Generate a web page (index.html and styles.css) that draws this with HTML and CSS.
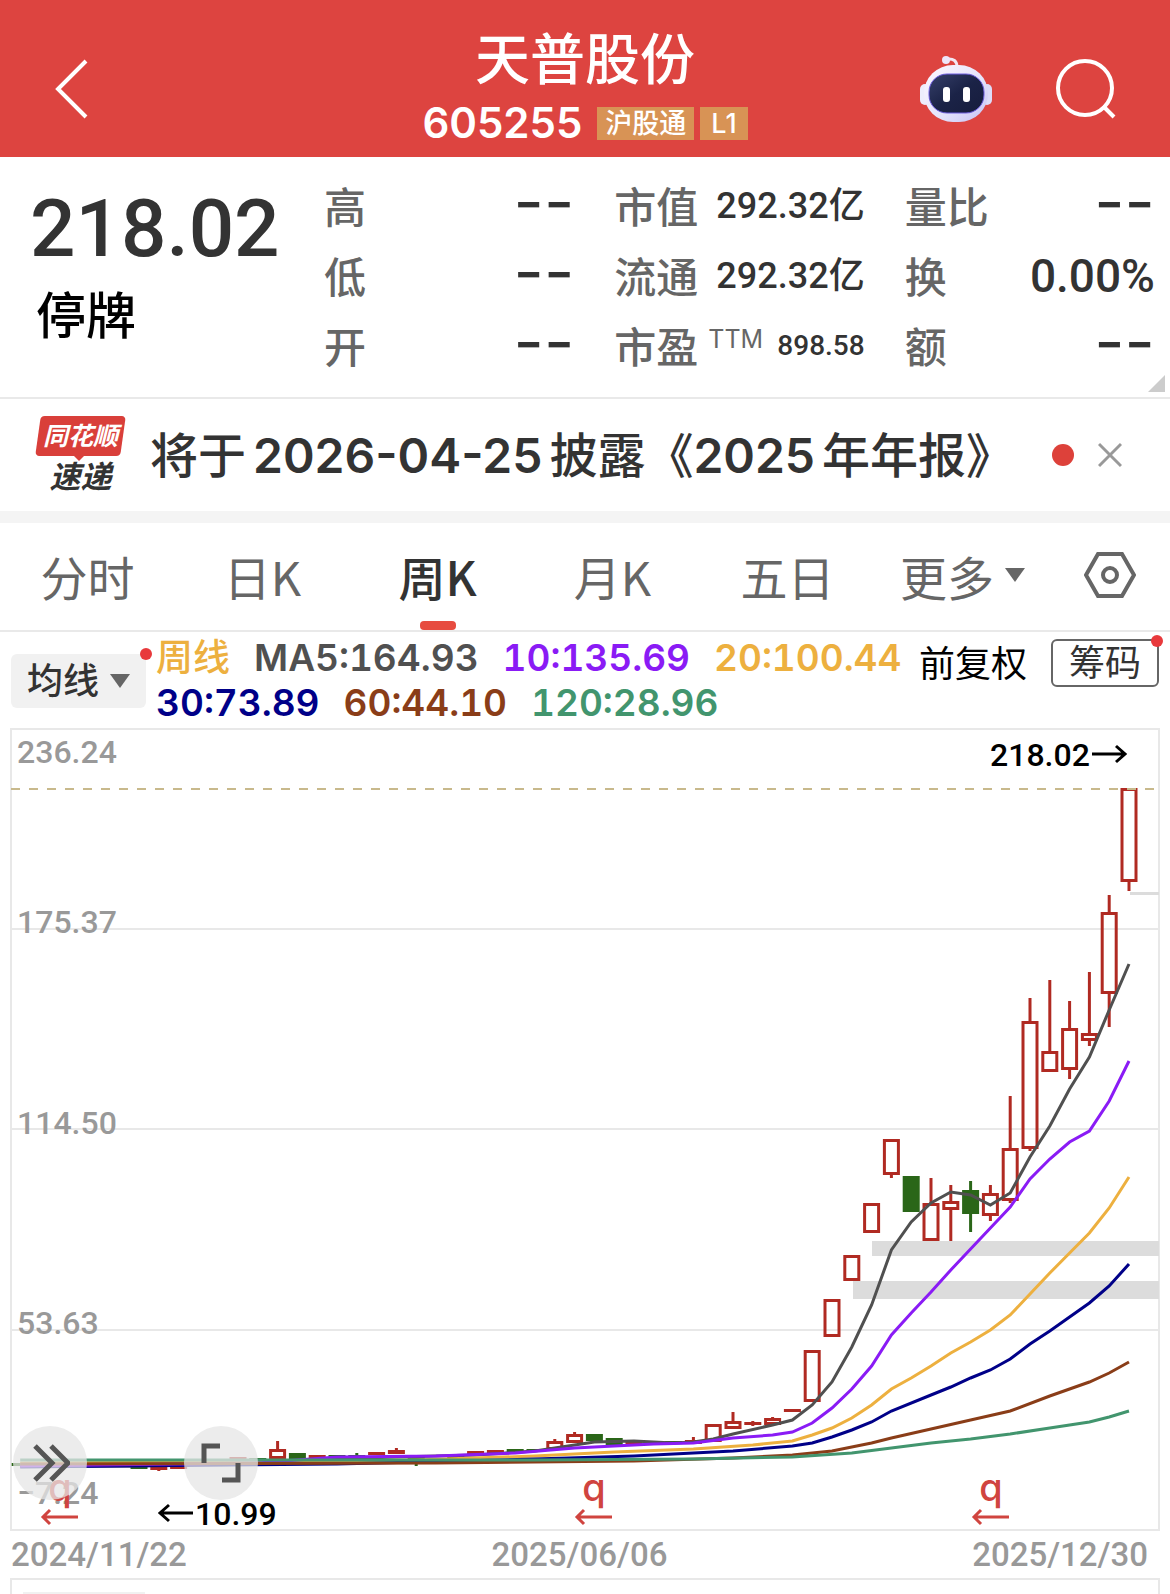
FILE: index.html
```html
<!DOCTYPE html>
<html lang="zh-CN">
<head>
    <meta charset="UTF-8">
    <meta name="viewport" content="width=device-width, initial-scale=1">
    <title>天普股份 605255</title>
    <link rel="stylesheet" href="styles.css">
</head>
<body>
    <header class="header">
        <button class="icon-btn back" aria-label="返回">
            <svg width="36" height="62" viewBox="0 0 36 62"><path d="M32 3 L4 31 L32 59" fill="none" stroke="#fff" stroke-width="4"/></svg>
        </button>
        <div class="title">
            <h1>天普股份</h1>
            <div class="code-line">
                <span class="code">605255</span>
                <span class="tag">沪股通</span>
                <span class="tag tag-level">L1</span>
            </div>
        </div>
        <div class="header-actions">
            <button class="icon-btn" aria-label="智能助手">
                <svg width="72" height="68" viewBox="0 0 72 68">
                    <defs>
                        <linearGradient id="shell" x1="0" y1="0" x2="1" y2="1">
                            <stop offset="0" stop-color="#fdf9ff"/>
                            <stop offset="0.6" stop-color="#e3e2fb"/>
                            <stop offset="1" stop-color="#c4c0f3"/>
                        </linearGradient>
                        <linearGradient id="face" x1="0" y1="0" x2="1" y2="1">
                            <stop offset="0" stop-color="#36406a"/>
                            <stop offset="0.5" stop-color="#1b2347"/>
                            <stop offset="1" stop-color="#161c3c"/>
                        </linearGradient>
                    </defs>
                    <path d="M27 4 Q37 3 37 12" fill="none" stroke="#f3e6f2" stroke-width="3"/>
                    <circle cx="26" cy="5" r="4" fill="#eee6fa"/>
                    <rect x="0" y="29" width="10" height="21" rx="5" fill="#ededfc"/>
                    <rect x="62" y="29" width="10" height="21" rx="5" fill="#dddcf8"/>
                    <rect x="4" y="10" width="64" height="57" rx="29" fill="url(#shell)"/>
                    <rect x="9" y="19" width="55" height="39" rx="18" fill="url(#face)" stroke="#6f5fe0" stroke-width="1"/>
                    <rect x="23" y="32" width="7" height="15" rx="3" fill="#fff"/>
                    <rect x="43" y="32" width="7" height="15" rx="3" fill="#fff"/>
                </svg>
            </button>
            <button class="icon-btn" aria-label="搜索">
                <svg width="60" height="60" viewBox="0 0 60 60" fill="none" stroke="#fff" stroke-width="4"><circle cx="29" cy="29" r="27"/><path d="M47 47 L58 58"/></svg>
            </button>
        </div>
    </header>

    <section class="quote">
        <div class="price-box">
            <div class="price">218.02</div>
            <div class="status">停牌</div>
        </div>
        <dl class="stats">
            <div class="stat"><dt>高</dt><dd class="empty">--</dd></div>
            <div class="stat"><dt>低</dt><dd class="empty">--</dd></div>
            <div class="stat"><dt>开</dt><dd class="empty">--</dd></div>
        </dl>
        <dl class="stats">
            <div class="stat"><dt>市值</dt><dd>292.32亿</dd></div>
            <div class="stat"><dt>流通</dt><dd>292.32亿</dd></div>
            <div class="stat"><dt>市盈<sup>TTM</sup></dt><dd class="small">898.58</dd></div>
        </dl>
        <dl class="stats">
            <div class="stat"><dt>量比</dt><dd class="empty">--</dd></div>
            <div class="stat"><dt>换</dt><dd class="large">0.00%</dd></div>
            <div class="stat"><dt>额</dt><dd class="empty">--</dd></div>
        </dl>
        <span class="corner"></span>
    </section>

    <section class="notice">
        <div class="notice-logo">
            <span class="logo-top">同花顺</span>
            <span class="logo-bottom">速递</span>
        </div>
        <a href="#" class="notice-text">将于<span class="num date">2026-04-25</span>披露《<span class="num year">2025</span>年年报》</a>
        <span class="dot"></span>
        <button class="icon-btn" aria-label="关闭">
            <svg width="24" height="26" viewBox="0 0 24 26"><path d="M1 2 L23 24 M23 2 L1 24" stroke="#999" stroke-width="3"/></svg>
        </button>
    </section>

    <nav class="tabs">
        <button class="tab">分时</button>
        <button class="tab">日K</button>
        <button class="tab active">周K</button>
        <button class="tab">月K</button>
        <button class="tab">五日</button>
        <button class="tab">更多<span class="caret"></span></button>
        <button class="tab" aria-label="设置">
            <svg width="52" height="48" viewBox="0 0 52 48" fill="none" stroke="#666" stroke-width="4"><path d="M14 3 H38 L50 24 L38 45 H14 L2 24 Z"/><circle cx="26" cy="24" r="7"/></svg>
        </button>
    </nav>

    <section class="ma-bar">
        <button class="ma-select">均线<span class="caret"></span><span class="badge"></span></button>
        <div class="ma-values">
            <div class="ma-row">
                <span class="week">周线</span>
                <span class="ma5">MA5:164.93</span>
                <span class="ma10">10:135.69</span>
                <span class="ma20">20:100.44</span>
            </div>
            <div class="ma-row">
                <span class="ma30">30:73.89</span>
                <span class="ma60">60:44.10</span>
                <span class="ma120">120:28.96</span>
            </div>
        </div>
        <button class="adjust">前复权</button>
        <button class="chips">筹码<span class="badge"></span></button>
    </section>

    <section class="chart">
        <svg id="kline" viewBox="0 728 1170 804" role="img" aria-label="周K线图"></svg>
        <button class="round-btn scroll-btn" aria-label="快进">
            <svg width="40" height="40" viewBox="0 0 40 40"><path d="M5 3 L22 20 L5 37 M21 3 L38 20 L21 37"/></svg>
        </button>
        <button class="round-btn full-btn" aria-label="全屏">
            <svg width="40" height="40" viewBox="0 0 40 40"><path d="M3 20 V3 H19 M37 20 V37 H21"/></svg>
        </button>
    </section>
    <div class="dates">
        <span>2024/11/22</span>
        <span>2025/06/06</span>
        <span>2025/12/30</span>
    </div>
    <div class="sub-chart"><span class="sub-select"></span></div>

    <script src="script.js"></script>
</body>
</html>
```
FILE: styles.css
```css
* {
    box-sizing: border-box;
}

body {
    margin: 0;
    background-color: #fff;
    color: #333;
    font-family: Inter, "Noto Sans CJK SC", sans-serif;
}

button {
    padding: 0;
    border: none;
    background: none;
    color: inherit;
    font: inherit;
    white-space: nowrap;
    cursor: pointer;
}

h1,
dl,
dd {
    margin: 0;
}

svg {
    display: block;
}

.header {
    display: grid;
    grid-template-columns: 1fr auto 1fr;
    align-items: center;
    padding: 25px 54px 4px;
    background-color: #dd4440;
    color: #fff;
}

.back {
    justify-self: start;
}

.title {
    text-align: center;
}

.title h1 {
    font-size: 55px;
    font-weight: 500;
    line-height: 68px;
}

.code-line {
    display: flex;
    align-items: center;
    justify-content: center;
    gap: 6px;
    line-height: 60px;
}

.code {
    margin-right: 9px;
    font-size: 42px;
    font-weight: 600;
}

.tag {
    padding: 0 8px;
    background-color: #d89355;
    font-size: 27px;
    font-weight: 500;
    line-height: 33px;
}

.tag-level {
    padding: 0 11px;
}

.header-actions {
    display: flex;
    align-items: center;
    justify-content: flex-end;
    gap: 64px;
}

.quote {
    position: relative;
    display: grid;
    grid-template-columns: 254px repeat(3, 1fr);
    gap: 40px;
    padding: 14px 15px 16px 30px;
    border-bottom: 2px solid #e9e9e9;
}

.price {
    font-family: Roboto, sans-serif;
    font-size: 80px;
    font-weight: 500;
    line-height: 116px;
}

.status {
    padding-left: 6px;
    color: #000;
    font-size: 50px;
    font-weight: 500;
    line-height: 58px;
}

.stat {
    display: flex;
    align-items: center;
    justify-content: space-between;
    height: 70px;
    white-space: nowrap;
}

.stat dt {
    padding-bottom: 4px;
    color: #666;
    font-size: 42px;
    font-weight: 500;
}

.stat sup {
    margin-left: 10px;
    font-size: 25px;
    font-weight: 400;
    line-height: 25px;
}

.stat dd {
    font-family: Roboto, "Noto Sans CJK SC", sans-serif;
    font-size: 36px;
    font-weight: 500;
    line-height: 60px;
}

.stat .empty {
    padding-bottom: 10px;
    font-family: Inter, sans-serif;
    font-size: 66px;
    font-weight: 400;
}

.stat .large {
    font-size: 46px;
}

.stat .small {
    font-size: 28px;
}

.corner {
    position: absolute;
    right: 5px;
    bottom: 5px;
    width: 17px;
    height: 17px;
    background-color: #ccc;
    clip-path: polygon(100% 0, 100% 100%, 0 100%);
}

.notice {
    display: flex;
    align-items: center;
    gap: 24px;
    height: 124px;
    padding: 0 48px 0 35px;
    border-bottom: 12px solid #f4f4f4;
}

.notice-logo {
    position: relative;
    flex-shrink: 0;
    width: 91px;
    font-style: italic;
    font-weight: 700;
    text-align: center;
}

.logo-top,
.logo-bottom {
    display: block;
}

.logo-top {
    position: relative;
    color: #fff;
    font-size: 25px;
    line-height: 40px;
}

.logo-top::before {
    content: "";
    position: absolute;
    inset: 0 3px;
    z-index: -1;
    border-radius: 4px;
    background-color: #d93f3a;
    transform: skewX(-8deg);
}

.logo-top::after {
    content: "";
    position: absolute;
    left: 38px;
    top: 39px;
    border: 6px solid transparent;
    border-top-color: #d93f3a;
}

.logo-bottom {
    padding-top: 4px;
    font-size: 31px;
    line-height: 34px;
}

.notice-text {
    flex: 1;
    padding-bottom: 7px;
    color: #333;
    font-size: 48px;
    font-weight: 500;
    text-decoration: none;
    white-space: nowrap;
}

.num {
    margin-right: 7px;
    font-weight: 600;
}

.date {
    margin-left: 7px;
}

.dot {
    width: 22px;
    height: 22px;
    border-radius: 50%;
    background-color: #dd413a;
}

.tabs {
    display: grid;
    grid-template-columns: repeat(6, 175fr) 120fr;
    height: 109px;
    border-bottom: 2px solid #e9e9e9;
}

.tab {
    position: relative;
    display: flex;
    align-items: center;
    justify-content: center;
    padding-bottom: 3px;
    color: #666;
    font-family: "Noto Sans CJK SC", sans-serif;
    font-size: 47px;
    font-weight: 400;
}

.tab.active {
    color: #333;
    font-weight: 500;
}

.tab.active::after {
    content: "";
    position: absolute;
    bottom: 0;
    width: 36px;
    height: 9px;
    border-radius: 4px;
    background-color: #e74c40;
}

.caret {
    margin-left: 11px;
    border: 10px solid transparent;
    border-top: 14px solid #666;
    border-bottom: none;
}

.ma-bar {
    display: flex;
    align-items: flex-start;
    height: 96px;
    padding: 0 11px;
}

.ma-select {
    position: relative;
    display: flex;
    align-items: center;
    margin-top: 22px;
    padding: 0 16px;
    border-radius: 6px;
    background-color: #f1f1f1;
    font-size: 36px;
    font-weight: 500;
    line-height: 54px;
}

.badge {
    position: absolute;
    top: -6px;
    right: -6px;
    width: 12px;
    height: 12px;
    border-radius: 50%;
    background-color: #e8393c;
}

.ma-values {
    flex: 1;
    padding-top: 3px;
    padding-left: 10px;
    font-size: 37px;
    font-weight: 600;
    font-variant-numeric: tabular-nums;
    line-height: 45px;
    white-space: nowrap;
}

.ma-row {
    display: flex;
    gap: 24px;
}

.week,
.ma20 {
    color: #edb03f;
}

.week {
    font-weight: 500;
}

.ma5 {
    color: #505050;
}

.ma10 {
    color: #8a1bf5;
}

.ma30 {
    color: #000088;
}

.ma60 {
    color: #8a3d18;
}

.ma120 {
    color: #42956e;
}

.adjust {
    margin: 7px 24px 0 0;
    color: #000;
    font-size: 36px;
    line-height: 50px;
}

.chips {
    position: relative;
    margin-top: 7px;
    padding: 0 16px;
    border: 2px solid #666;
    border-radius: 6px;
    font-size: 36px;
    line-height: 44px;
}

.chart {
    position: relative;
}

.chart > svg {
    width: 100%;
    height: auto;
    font-family: Roboto, sans-serif;
    font-size: 32px;
    font-weight: 500;
}

.axis-label {
    fill: #999;
}

.price-label {
    fill: #000;
}

.mark {
    fill: #d0443f;
    font-family: Inter, sans-serif;
    font-size: 38px;
    text-anchor: middle;
}

.round-btn {
    position: absolute;
    bottom: 4%;
    width: 74px;
    height: 74px;
    border-radius: 50%;
    background-color: rgba(230, 230, 230, 0.75);
}

.round-btn svg {
    margin: auto;
    fill: none;
    stroke: #555;
    stroke-width: 5;
}

.scroll-btn {
    left: 13px;
}

.full-btn {
    left: 184px;
}

.dates {
    display: flex;
    justify-content: space-between;
    padding: 0 22px 0 11px;
    color: #999;
    font-family: Roboto, sans-serif;
    font-size: 33px;
    font-weight: 500;
    line-height: 46px;
}

.sub-chart {
    height: 16px;
    margin: 0 10px;
    padding: 12px 11px 0;
    border: 2px solid #e8e8e8;
    border-bottom: none;
}

.sub-select {
    display: block;
    width: 122px;
    height: 2px;
    background-color: #f1f1f1;
}
```
FILE: script.js
```javascript
var svg = document.getElementById("kline");
var RED = "#b02a22";
var GREEN = "#2a6618";

// weeks back from the last one, high, body top, body bottom, low, rising
var candles = [
    [0, 788, 788, 882, 891, 1], [1, 895, 912, 994, 1027, 1], [2, 972, 1033, 1041, 1046, 1],
    [3, 1001, 1028, 1070, 1079, 1], [4, 980, 1051, 1072, 1072, 1], [5, 998, 1021, 1149, 1151, 1],
    [6, 1096, 1148, 1201, 1203, 1], [7, 1185, 1193, 1216, 1221, 1], [8, 1181, 1190, 1214, 1232, 0],
    [9, 1185, 1201, 1210, 1241, 1], [10, 1178, 1203, 1241, 1241, 1], [11, 1176, 1176, 1212, 1212, 0],
    [12, 1139, 1139, 1175, 1178, 1], [13, 1203, 1203, 1233, 1233, 1], [14, 1255, 1255, 1281, 1281, 1],
    [15, 1299, 1299, 1337, 1337, 1], [16, 1350, 1350, 1402, 1402, 1], [17, 1409, 1409, 1412, 1412, 1],
    [18, 1417, 1418, 1425, 1425, 1], [19, 1421, 1422, 1425, 1426, 1], [20, 1412, 1421, 1429, 1429, 1],
    [21, 1424, 1424, 1442, 1442, 1], [22, 1437, 1440, 1444, 1444, 1], [23, 1441, 1441, 1444, 1444, 0],
    [24, 1441, 1441, 1444, 1444, 0], [25, 1441, 1441, 1445, 1445, 1], [26, 1438, 1438, 1445, 1445, 0],
    [27, 1434, 1434, 1441, 1441, 0], [28, 1432, 1434, 1443, 1443, 1], [29, 1439, 1441, 1450, 1450, 1],
    [30, 1449, 1449, 1452, 1452, 0], [31, 1449, 1449, 1452, 1452, 0], [32, 1450, 1450, 1453, 1453, 1],
    [33, 1451, 1451, 1456, 1456, 1], [34, 1456, 1456, 1459, 1459, 0], [36, 1457, 1457, 1460, 1466, 0],
    [37, 1448, 1450, 1454, 1454, 1], [38, 1452, 1452, 1455, 1455, 1], [39, 1453, 1455, 1458, 1458, 0],
    [40, 1455, 1455, 1458, 1458, 0], [41, 1455, 1455, 1458, 1458, 1], [42, 1453, 1453, 1459, 1459, 0],
    [43, 1441, 1449, 1459, 1459, 1], [44, 1458, 1458, 1461, 1461, 0], [45, 1457, 1457, 1460, 1460, 1],
    [48, 1466, 1466, 1469, 1469, 1], [49, 1466, 1467, 1470, 1471, 1], [50, 1466, 1466, 1469, 1469, 0],
    [56, 1463, 1463, 1466, 1466, 0]
];

// each point: weeks back, y
var averages = [
    ["#505050", [[0, 964], [1, 1010], [2, 1057], [3, 1089], [4, 1126], [5, 1157], [6, 1193], [7, 1205], [8, 1195], [9, 1192], [10, 1203], [11, 1222], [12, 1250], [13, 1305], [14, 1347], [15, 1382], [16, 1405], [17, 1420], [18, 1425], [20, 1434], [21, 1439], [22, 1442], [23, 1443], [25, 1441], [27, 1442], [29, 1448], [30, 1451], [33, 1455], [37, 1457], [43, 1461], [50, 1466], [56, 1466]]],
    ["#edb03f", [[0, 1177], [1, 1208], [2, 1233], [3, 1253], [4, 1273], [5, 1294], [6, 1315], [7, 1330], [8, 1342], [9, 1353], [10, 1366], [11, 1378], [12, 1389], [13, 1405], [14, 1418], [15, 1428], [16, 1435], [17, 1441], [19, 1445], [22, 1449], [26, 1452], [30, 1456], [36, 1460], [44, 1462], [56, 1463]]],
    ["#000088", [[0, 1264], [1, 1286], [2, 1303], [3, 1317], [4, 1331], [5, 1344], [6, 1359], [7, 1370], [8, 1378], [9, 1387], [10, 1395], [12, 1411], [13, 1422], [14, 1430], [15, 1437], [16, 1443], [17, 1446], [20, 1451], [25, 1456], [30, 1459], [40, 1464], [56, 1467]]],
    ["#8a1bf5", [[0, 1061], [1, 1101], [2, 1131], [3, 1142], [4, 1159], [5, 1179], [6, 1207], [7, 1228], [8, 1249], [9, 1270], [10, 1292], [11, 1313], [12, 1335], [13, 1366], [14, 1389], [15, 1408], [16, 1423], [17, 1432], [18, 1435], [20, 1438], [22, 1443], [24, 1444], [28, 1448], [31, 1453], [35, 1456], [40, 1457], [44, 1463], [56, 1466]]],
    ["#8a3d18", [[0, 1362], [1, 1373], [2, 1382], [4, 1396], [6, 1411], [8, 1420], [10, 1429], [12, 1438], [13, 1443], [15, 1451], [17, 1455], [20, 1458], [25, 1461], [35, 1463], [56, 1464]]],
    ["#42956e", [[0, 1411], [1, 1417], [2, 1422], [4, 1428], [6, 1434], [8, 1439], [10, 1443], [12, 1448], [14, 1453], [17, 1457], [22, 1459], [30, 1460], [56, 1460]]]
];

function add(tag, attrs, text) {
    var el = document.createElementNS("http://www.w3.org/2000/svg", tag);
    for (var name in attrs) {
        el.setAttribute(name, attrs[name]);
    }
    if (text) {
        el.textContent = text;
    }
    svg.appendChild(el);
}

function weekX(n) {
    return 1129 - n * 19.8;
}

function line(d, color, width) {
    add("path", { d: d, fill: "none", stroke: color, "stroke-width": width });
}

// frame and grid
add("rect", { x: 11, y: 729, width: 1148, height: 801, fill: "none", stroke: "#e8e8e8", "stroke-width": 2 });
[929, 1129, 1330].forEach(function (y) {
    line("M11 " + y + " H1159", "#e8e8e8", 2);
});

// price gaps
add("rect", { x: 872, y: 1241, width: 287, height: 15, fill: "#dcdcdc" });
add("rect", { x: 853, y: 1281, width: 306, height: 18, fill: "#dcdcdc" });
add("rect", { x: 1130, y: 892, width: 29, height: 3, fill: "#dcdcdc" });

[["236.24", 763], ["175.37", 933], ["114.50", 1134], ["53.63", 1334], ["−7.24", 1504]].forEach(function (label) {
    add("text", { x: 17, y: label[1], "class": "axis-label" }, label[0]);
});

candles.forEach(function (c) {
    var x = weekX(c[0]);
    var color = c[5] ? RED : GREEN;
    line("M" + x + " " + c[1] + " V" + c[2] + " M" + x + " " + c[3] + " V" + c[4], color, 3);
    if (c[5] && c[3] - c[2] > 5) {
        add("rect", { x: x - 7, y: c[2] + 1.5, width: 14, height: c[3] - c[2] - 3, fill: "none", stroke: color, "stroke-width": 3 });
    } else {
        add("rect", { x: x - 8.5, y: c[2], width: 17, height: c[3] - c[2], fill: color });
    }
});

add("path", { d: "M11 789 H1155", stroke: "#c8b98c", "stroke-width": 2, "stroke-dasharray": "9 9" });

averages.forEach(function (ma) {
    var points = ma[1].map(function (p) {
        return weekX(p[0]) + "," + p[1];
    });
    add("polyline", { points: points.join(" "), fill: "none", stroke: ma[0], "stroke-width": 3 });
});

add("text", { x: 990, y: 766, "class": "price-label" }, "218.02");
line("M1092 754 H1125 M1116 746 L1125 754 L1116 762", "#000", 3);
add("text", { x: 195, y: 1525, "class": "price-label" }, "10.99");
line("M193 1513 H160 M169 1505 L160 1513 L169 1521", "#000", 3);

[60, 594, 991].forEach(function (x) {
    add("text", { x: x, y: 1501, "class": "mark" }, "q");
    line("M" + (x + 18) + " 1517 H" + (x - 17) + " M" + (x - 10) + " 1510 L" + (x - 17) + " 1517 L" + (x - 10) + " 1524", "#d0443f", 3);
});
```
